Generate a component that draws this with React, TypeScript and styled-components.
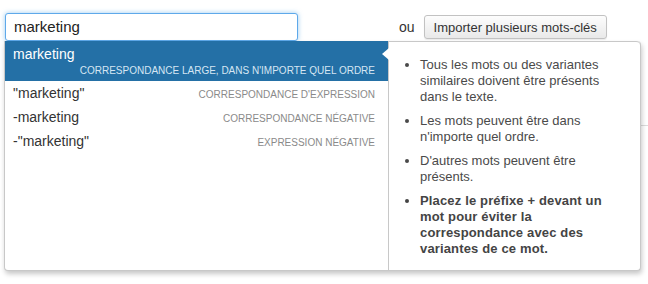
import React from 'react';
import styled, { createGlobalStyle, css } from 'styled-components';

type MatchOption = {
  term: string;
  label: string;
  selected?: boolean;
};

const options: MatchOption[] = [
  { term: 'marketing', label: "Correspondance large, dans n'importe quel ordre", selected: true },
  { term: '"marketing"', label: "Correspondance d'expression" },
  { term: '-marketing', label: 'Correspondance négative' },
  { term: '-"marketing"', label: 'Expression négative' },
];

const GlobalStyle = createGlobalStyle`
  html, body {
    margin: 0;
    padding: 0;
    background: #fff;
  }
  body {
    font-family: 'Liberation Sans', Arial, sans-serif;
    color: #333;
  }
`;

const Page = styled.div`
  width: 648px;
  height: 284px;
  overflow: hidden;
  padding: 13px 0 0 5px;
  box-sizing: border-box;
`;

const Toolbar = styled.div`
  display: flex;
  align-items: center;
  height: 28px;
`;

const SearchWrap = styled.div`
  position: relative;
  width: 293px;
  height: 28px;
  z-index: 2;
`;

const SearchInput = styled.input`
  box-sizing: border-box;
  width: 100%;
  height: 100%;
  border: 1px solid #5ea9ea;
  border-radius: 3px;
  box-shadow: 0 0 5px rgba(102, 175, 233, 0.65);
  padding: 0 0 1px 8px;
  font-family: 'Liberation Sans', Arial, sans-serif;
  font-size: 15px;
  color: #222;
  outline: none;
`;

const OrText = styled.span`
  margin-left: 101px;
  font-size: 14px;
  color: #333;
`;

const ImportButton = styled.button`
  margin-left: 9px;
  height: 24px;
  padding: 0 9px;
  border: 1px solid #c2c2c2;
  border-radius: 3px;
  background: linear-gradient(#fdfdfd, #e9e9e9);
  font-family: 'Liberation Sans', Arial, sans-serif;
  font-size: 13px;
  color: #333;
  box-shadow: 0 1px 1px rgba(0, 0, 0, 0.08);
`;

const Content = styled.div`
  margin-top: 84px;
  border-top: 1px solid #dcdcdc;
`;

/* menu that drops over the page under the search field */
const Dropdown = styled.div`
  position: absolute;
  top: 28px;
  left: -1px;
  width: 637px;
  height: 230px;
  box-sizing: border-box;
  display: flex;
  background: #fff;
  border: 1px solid #c8c8c8;
  border-top: none;
  border-radius: 0 4px 4px 4px;
  box-shadow: 1px 3px 5px rgba(0, 0, 0, 0.22);
`;

const OptionList = styled.ul`
  list-style: none;
  margin: 0;
  padding: 0;
  width: 383px;
  border-right: 1px solid #c8c8c8;
`;

const Option = styled.li<{ $selected?: boolean }>`
  display: flex;
  flex-direction: column;
  padding: 0 13px 0 8px;
  height: 24px;
  justify-content: center;
  color: #333;
  ${(p) =>
    p.$selected &&
    css`
      height: 40px;
      background: #2470a6;
      color: #fff;
    `}
`;

const OptionRow = styled.div`
  display: flex;
  align-items: baseline;
  justify-content: space-between;
`;

const Term = styled.span`
  font-size: 14px;
`;

const MatchLabel = styled.span<{ $selected?: boolean }>`
  font-size: 10px;
  text-transform: uppercase;
  color: ${(p) => (p.$selected ? '#d6e6f3' : '#8a8a8a')};
  align-self: ${(p) => (p.$selected ? 'flex-end' : 'auto')};
  margin-top: ${(p) => (p.$selected ? '3px' : '0')};
`;

const HelpPanel = styled.div`
  position: relative;
  flex: 1;
  border-top: 1px solid #c8c8c8;
  border-radius: 0 4px 0 0;
  padding: 15px 20px 0 18px;

  &::before {
    content: '';
    position: absolute;
    left: -7px;
    top: 6px;
    border-style: solid;
    border-width: 6px 7px 6px 0;
    border-color: transparent #fff transparent transparent;
  }
`;

const HelpList = styled.ul`
  margin: 0;
  padding-left: 13px;
  font-size: 13px;
  line-height: 16px;
  color: #4a4a4a;
`;

const HelpItem = styled.li<{ $strong?: boolean }>`
  margin-bottom: 8px;
  font-weight: ${(p) => (p.$strong ? 'bold' : 'normal')};
  letter-spacing: ${(p) => (p.$strong ? '0.15px' : '0')};
  color: ${(p) => (p.$strong ? '#444' : '#4a4a4a')};
`;

export default function App() {
  return (
    <Page>
      <GlobalStyle />
      <Toolbar>
        <SearchWrap>
          <SearchInput defaultValue="marketing" />
          <Dropdown>
            <OptionList>
              {options.map((o) =>
                o.selected ? (
                  <Option key={o.term} $selected>
                    <Term>{o.term}</Term>
                    <MatchLabel $selected>{o.label}</MatchLabel>
                  </Option>
                ) : (
                  <Option key={o.term}>
                    <OptionRow>
                      <Term>{o.term}</Term>
                      <MatchLabel>{o.label}</MatchLabel>
                    </OptionRow>
                  </Option>
                )
              )}
            </OptionList>
            <HelpPanel>
              <HelpList>
                <HelpItem>Tous les mots ou des variantes similaires doivent être présents dans le texte.</HelpItem>
                <HelpItem>Les mots peuvent être dans n'importe quel ordre.</HelpItem>
                <HelpItem>D'autres mots peuvent être présents.</HelpItem>
                <HelpItem $strong>
                  Placez le préfixe + devant un mot pour éviter la correspondance avec des variantes de ce mot.
                </HelpItem>
              </HelpList>
            </HelpPanel>
          </Dropdown>
        </SearchWrap>
        <OrText>ou</OrText>
        <ImportButton>Importer plusieurs mots-clés</ImportButton>
      </Toolbar>
      <Content />
    </Page>
  );
}
